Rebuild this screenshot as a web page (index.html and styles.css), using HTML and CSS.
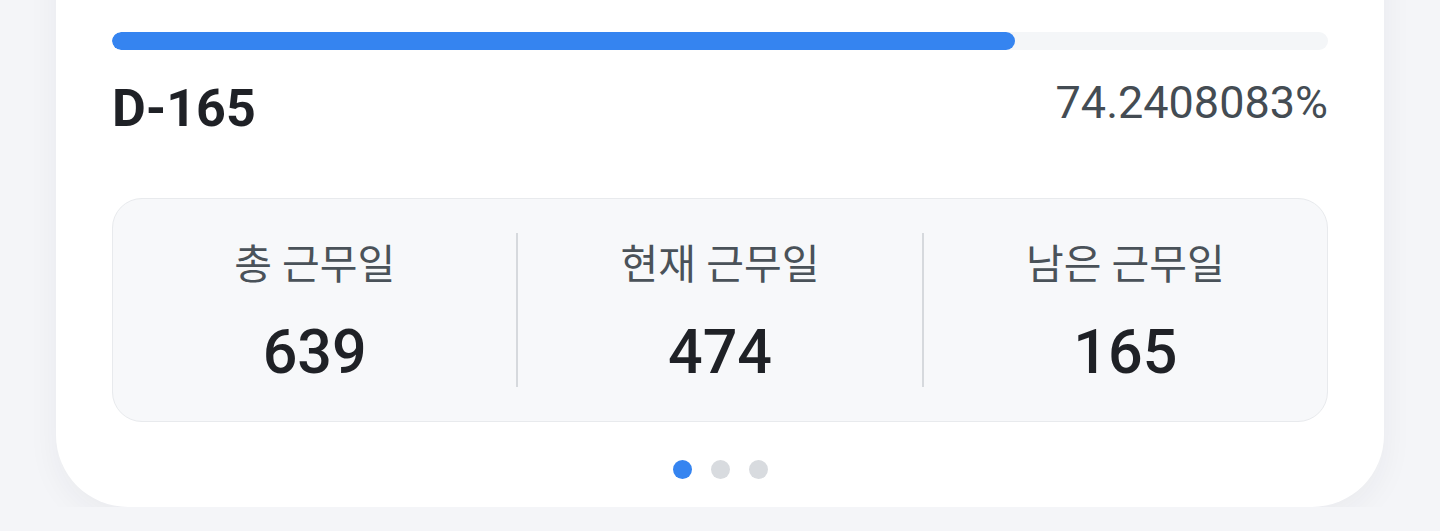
FILE: index.html
```html
<!DOCTYPE html>
<html>
  <head>
    <title>전역일 계산기</title>
    <link rel="stylesheet" href="styles.css">
  </head>
  <body>
    <div class="card">
      <div class="progress">
        <div class="progress-fill" style="width: 74.2408083%"></div>
      </div>
      <div class="summary">
        <div class="dday">D-165</div>
        <div class="percent">74.2408083%</div>
      </div>
      <div class="stats">
        <div class="stat">
          <div class="stat-label">총 근무일</div>
          <div class="stat-value">639</div>
        </div>
        <div class="stat">
          <div class="stat-label">현재 근무일</div>
          <div class="stat-value">474</div>
        </div>
        <div class="stat">
          <div class="stat-label">남은 근무일</div>
          <div class="stat-value">165</div>
        </div>
      </div>
      <div class="dots">
        <span class="dot dot-active"></span>
        <span class="dot"></span>
        <span class="dot"></span>
      </div>
    </div>
  </body>
</html>
```

FILE: styles.css
```css
body {
  margin: 0;
  background-color: #f4f5f8;
  font-family: Roboto, "Noto Sans CJK KR", sans-serif;
  overflow: hidden;
}

.card {
  width: 1328px;
  box-sizing: border-box;
  margin: -100px 0 0 56px;
  padding: 132px 56px 0;
  height: 607px;
  background-color: #fff;
  border-radius: 72px;
  box-shadow: 0 10px 32px rgba(30, 40, 60, 0.05);
}

.progress {
  height: 18px;
  border-radius: 9px;
  background-color: #f4f6f8;
  overflow: hidden;
}

.progress-fill {
  height: 100%;
  border-radius: 9px;
  background-color: #3584f0;
}

.summary {
  display: flex;
  justify-content: space-between;
  align-items: flex-start;
  margin-top: 26px;
}

.dday {
  margin-top: 2px;
  font-size: 52px;
  font-weight: 700;
  line-height: 1.2;
  color: #1f2126;
}

.percent {
  font-size: 45px;
  line-height: 1.2;
  color: #444c53;
}

.stats {
  display: flex;
  margin-top: 58px;
  height: 224px;
  box-sizing: border-box;
  padding: 34px 0;
  border: 1.5px solid #e8eaed;
  border-radius: 30px;
  background-color: #f7f8fa;
}

.stat {
  flex: 1;
  display: flex;
  flex-direction: column;
  align-items: center;
  gap: 36px;
  padding-top: 12px;
}

.stat + .stat {
  border-left: 2px solid #d6d9dd;
}

.stat-label {
  font-size: 41px;
  line-height: 1;
  color: #4a5259;
}

.stat-value {
  font-size: 61px;
  font-weight: 500;
  line-height: 1;
  color: #1f2126;
}

.dots {
  display: flex;
  justify-content: center;
  gap: 19px;
  margin-top: 38px;
}

.dot {
  width: 19px;
  height: 19px;
  border-radius: 50%;
  background-color: #d8dbdf;
}

.dot-active {
  background-color: #3584f0;
}
```
